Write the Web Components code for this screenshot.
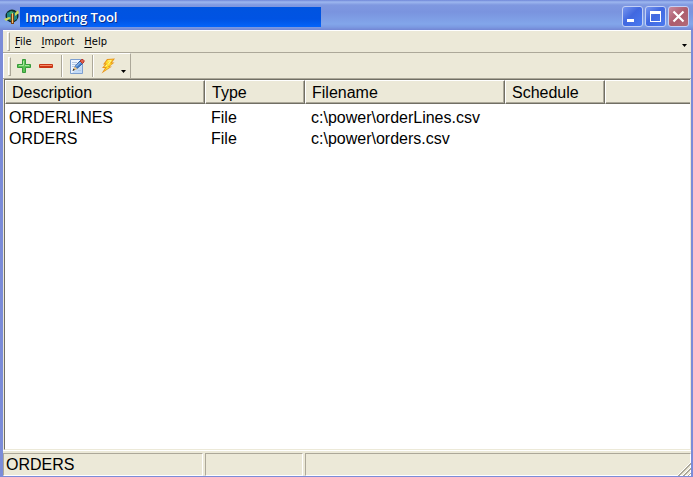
<!DOCTYPE html>
<html lang="en">
<head>
<meta charset="utf-8">
<title>Importing Tool</title>
<style>
    html, body {
        height: 100%;
        margin: 0;
    }

    body {
        --face: #ece9d8;
        --shadow: #aca899;
        --dark: #716f64;
        --frame: #7b8cd8;
        --list-font: 16px "Liberation Sans", sans-serif;
        font-family: "Liberation Sans", sans-serif;
        color: #000;
    }
</style>
</head>
<body>
<app-window>
    <title-bar slot="title">Importing Tool</title-bar>
    <menu-bar slot="bars">
        <menu-item key="F">ile</menu-item>
        <menu-item key="I">mport</menu-item>
        <menu-item key="H">elp</menu-item>
    </menu-bar>
    <tool-bar slot="bars">
        <tool-button label="Add">
            <svg width="16" height="16" viewBox="0 0 16 16">
                <path d="M6.500 1.500h3v5h5v3h-5v5h-3v-5h-5v-3h5z" fill="#5cc455" stroke="#369a3b"/>
                <path d="M7.500 3v4.500H3M9 7.500h4" fill="none" stroke="#a6e69c"/>
            </svg>
        </tool-button>
        <tool-button label="Remove">
            <svg width="16" height="16" viewBox="0 0 16 16">
                <rect x="1" y="6" width="14" height="4" rx="1" fill="#c93414"/>
                <path d="M2 7.500h12" stroke="#f58a66"/>
            </svg>
        </tool-button>
        <tool-separator></tool-separator>
        <tool-button label="Edit">
            <svg width="16" height="16" viewBox="0 0 16 16">
                <path d="M1.500 1.500h12v14h-12z" fill="#eef5ff" stroke="#7d9fd0"/>
                <path d="M3 15h10V7z" fill="#c3dbf7"/>
                <path d="M3 4.500h5M3 6.500h4M3 8.500h2M9 12.500h3" stroke="#b4c9e6"/>
                <path d="M5 11.500l1-3 5-5.500 2.500 2.500-5.500 5z" fill="#4a88d4" stroke="#244f93"/>
                <path d="M7 8.500l4.500-4.500" stroke="#b3d6fa"/>
                <path d="M4 12.500l1.500-4 3 2.500z" fill="#efc88a"/>
                <path d="M3.500 13l1-2.500 1.500 1.500z" fill="#222"/>
                <path d="M11 3l1.500-1.500h1.500l1 1V4l-1.500 1.500z" fill="#e0604c" stroke="#b5352a"/>
            </svg>
        </tool-button>
        <tool-separator></tool-separator>
        <tool-button label="Run" drop>
            <svg width="16" height="16" viewBox="0 0 16 16">
                <path d="M7 1L15 .5 12 4.500h2.500L9.500 8.500H12L1.500 15.500 5 10H2l3-3.500H3z" fill="#e8951d"/>
                <path d="M7.500 2L13 1.500 10 5.500h2.500L7.500 9H10L4 13 7 9H4l3-3.500H5z" fill="#ffdc2e"/>
                <path d="M8 3l3-.5L8 6.500M7 7L5.500 8.500" fill="none" stroke="#fff58c"/>
            </svg>
        </tool-button>
    </tool-bar>
    <import-list></import-list>
    <status-bar slot="status">
        <status-panel>ORDERS</status-panel>
        <status-panel></status-panel>
        <status-panel></status-panel>
    </status-bar>
</app-window>

<script>
(function () {
    'use strict';

    // Registers an element whose shadow root is filled from a markup string.
    function define(name, html, setup) {
        const template = document.createElement('template');
        template.innerHTML = html;
        customElements.define(name, class extends HTMLElement {
            constructor() {
                super();
                this.attachShadow({ mode: 'open' }).appendChild(template.content.cloneNode(true));
            }

            connectedCallback() {
                if (setup) {
                    setup(this, this.shadowRoot);
                }
            }
        });
    }

    define('app-window', `
        <style>
            :host {
                display: flex;
                flex-direction: column;
                box-sizing: border-box;
                height: 100vh;
                background: var(--frame);
                padding: 0 2px 1px 3px;
            }

            #client {
                flex: 1;
                min-height: 0;
                display: flex;
                flex-direction: column;
                background: var(--face);
                border-top: 1px solid #fff;
            }

            main {
                flex: 1;
                min-height: 0;
                display: flex;
                margin: 0 1px;
            }

            main ::slotted(*) {
                flex: 1;
            }
        </style>
        <slot name="title"></slot>
        <div id="client">
            <slot name="bars"></slot>
            <main><slot></slot></main>
            <slot name="status"></slot>
        </div>
    `);

    define('title-bar', `
        <style>
            :host {
                display: flex;
                align-items: center;
                gap: 2px;
                box-sizing: border-box;
                height: 30px;
                margin: 0 -2px 0 -3px;
                padding: 3px 4px 0 4px;
                background: linear-gradient(#6f86d8 0, #9db7ef 2px, #7f98e0 5px, #7a94df 12px, #82a6ea 24px, #7c9ae2 27px, #7286d4 30px);
            }

            svg {
                display: block;
            }

            h1 {
                box-sizing: border-box;
                width: 44%;
                height: 20px;
                margin: 0 auto 0 -2px;
                padding-left: 5px;
                background: linear-gradient(#0054e0, #0053e3 60%, #0464fa);
                color: #fff;
                font: 600 13px/20px "Open Sans", sans-serif;
                text-shadow: 1px 1px #0a318c;
                white-space: nowrap;
            }

            button {
                width: 21px;
                height: 21px;
                padding: 0;
                border: 1px solid #c3d0f5;
                border-radius: 3px;
                background: linear-gradient(135deg, #7796ee, #4168e0 45%, #4a7af0);
            }

            button.close {
                background: linear-gradient(135deg, #c98a9e, #ad5c6c 50%, #b26a78);
            }
        </style>
        <svg width="16" height="16" viewBox="0 0 16 16">
            <circle cx="8" cy="7" r="6.500" fill="#102c2a"/>
            <path d="M3 4l4-2v10l-4-2zM10 3l3 2v5l-3 2z" fill="#1c8583"/>
            <path d="M0 10l5-2 2 1-5 3zM11 4l3-3 1 3-4 3z" fill="#c8d75a"/>
            <path d="M5 5l2-3 3 1-1 3z" fill="#3fa36c"/>
            <path d="M7 5h3v10H7z" fill="#7c4316"/>
            <path d="M8.500 4v10" stroke="#f3c671"/>
        </svg>
        <h1><slot></slot></h1>
        <button aria-label="Minimize">
            <svg width="19" height="19"><path d="M4 12h7v3H4z" fill="#fff"/></svg>
        </button>
        <button aria-label="Maximize">
            <svg width="19" height="19"><path d="M4 4h11v11H4zM5 7v7h9V7z" fill="#fff" fill-rule="evenodd"/></svg>
        </button>
        <button class="close" aria-label="Close">
            <svg width="19" height="19"><path d="M4.500 4.500l10 10M14.500 4.500l-10 10" stroke="#fff" stroke-width="2.200"/></svg>
        </button>
    `);

    define('menu-bar', `
        <style>
            :host {
                display: flex;
                align-items: center;
                box-sizing: border-box;
                height: 22px;
                padding: 0 4px;
                border-bottom: 1px solid var(--shadow);
            }

            nav {
                display: flex;
                flex: 1;
                gap: 10px;
                padding-left: 5px;
            }

            svg {
                align-self: flex-end;
                margin-bottom: 5px;
            }

            .grip {
                width: 1px;
                height: 17px;
                border: 1px solid var(--shadow);
                border-color: #fff var(--shadow) var(--shadow) #fff;
            }
        </style>
        <div class="grip"></div>
        <nav><slot></slot></nav>
        <svg width="5" height="3"><path d="M0 0h5L2.500 3z"/></svg>
    `);

    define('menu-item', `
        <style>
            :host {
                display: block;
            }

            button {
                padding: 0;
                border: 0;
                background: none;
                color: inherit;
                font: 11px/20px "DejaVu Sans Condensed", "Liberation Sans", sans-serif;
            }

            u {
                text-underline-offset: 2px;
            }
        </style>
        <button><u></u><slot></slot></button>
    `, (host, root) => {
        root.querySelector('u').textContent = host.getAttribute('key');
    });

    define('tool-bar', `
        <style>
            :host {
                display: block;
                border-bottom: 1px solid var(--shadow);
            }

            #band {
                display: flex;
                align-items: center;
                box-sizing: border-box;
                width: max-content;
                height: 25px;
                padding: 0 4px;
                border: 1px solid #fff;
                border-width: 1px 0 0 1px;
                border-right: 1px solid var(--shadow);
            }

            .grip {
                width: 1px;
                height: 17px;
                margin-right: 2px;
                border: 1px solid var(--shadow);
                border-color: #fff var(--shadow) var(--shadow) #fff;
            }
        </style>
        <div id="band">
            <div class="grip"></div>
            <slot></slot>
        </div>
    `);

    define('tool-button', `
        <style>
            :host {
                display: block;
            }

            button {
                display: flex;
                align-items: center;
                gap: 5px;
                height: 22px;
                padding: 0 3px;
                border: 0;
                background: none;
            }

            .arrow {
                display: none;
                margin-top: 10px;
            }

            :host([drop]) .arrow {
                display: block;
            }

            :host([drop]) button {
                padding-right: 0;
            }
        </style>
        <button>
            <slot></slot>
            <svg class="arrow" width="5" height="3"><path d="M0 0h5L2.500 3z"/></svg>
        </button>
    `, (host, root) => {
        root.querySelector('button').setAttribute('aria-label', host.getAttribute('label'));
    });

    define('tool-separator', `
        <style>
            :host {
                width: 1px;
                height: 22px;
                margin: 0 3px 0 4px;
                border-left: 1px solid var(--shadow);
                background: #fff;
            }
        </style>
    `);

    const imports = [
        ['ORDERLINES', 'File', 'c:\\power\\orderLines.csv', ''],
        ['ORDERS', 'File', 'c:\\power\\orders.csv', '']
    ];

    define('import-list', `
        <style>
            :host {
                display: block;
                overflow: hidden;
                border-top: 1px solid var(--dark);
                border-left: 1px solid var(--dark);
                border-bottom: 1px solid var(--face);
                background: #fff;
                font: var(--list-font);
            }

            table {
                width: 100%;
                table-layout: fixed;
                border-collapse: separate;
                border-spacing: 0;
            }

            .wide {
                width: 200px;
            }

            .narrow {
                width: 100px;
            }

            th {
                box-sizing: border-box;
                height: 24px;
                padding: 2px 6px 0;
                border: 1px solid var(--dark);
                border-top-color: #fff;
                border-left-color: #fff;
                background: var(--face);
                box-shadow: inset -1px -1px var(--shadow);
                font-weight: inherit;
                line-height: 20px;
                text-align: left;
            }

            th:last-child {
                border-right: 0;
                box-shadow: inset 0 -1px var(--shadow);
            }

            td {
                padding: 0 6px;
                line-height: 21px;
                white-space: nowrap;
            }

            td:first-child {
                padding-left: 4px;
            }

            tbody::before {
                content: "";
                display: block;
                height: 3px;
            }
        </style>
        <table>
            <colgroup>
                <col class="wide"><col class="narrow"><col class="wide"><col class="narrow"><col>
            </colgroup>
            <thead>
                <tr><th>Description</th><th>Type</th><th>Filename</th><th>Schedule</th><th></th></tr>
            </thead>
            <tbody></tbody>
        </table>
    `, (host, root) => {
        const body = root.querySelector('tbody');
        for (const item of imports) {
            const row = body.insertRow();
            for (const text of item) {
                row.insertCell().textContent = text;
            }
        }
    });

    define('status-bar', `
        <style>
            :host {
                display: grid;
                grid-template-columns: 200px 98px 1fr;
                gap: 2px;
                position: relative;
                padding-top: 2px;
                border-top: 1px solid #fff;
                font: var(--list-font);
            }

            .size {
                position: absolute;
                right: 0;
                bottom: 0;
            }
        </style>
        <slot></slot>
        <svg class="size" width="14" height="14">
            <path d="M0 14L14 0M5 14l9-9M10 14l4-4" stroke="#fff"/>
            <path d="M1 14L14 1M2 14L14 2M6 14l8-8M7 14l7-7M11 14l3-3" stroke="#aca899"/>
        </svg>
    `);

    define('status-panel', `
        <style>
            :host {
                display: block;
                box-sizing: border-box;
                height: 23px;
                padding-left: 2px;
                border: 1px solid var(--shadow);
                border-right-color: #fff;
                border-bottom-color: #fff;
                line-height: 21px;
            }
        </style>
        <slot></slot>
    `);
})();
</script>
</body>
</html>
